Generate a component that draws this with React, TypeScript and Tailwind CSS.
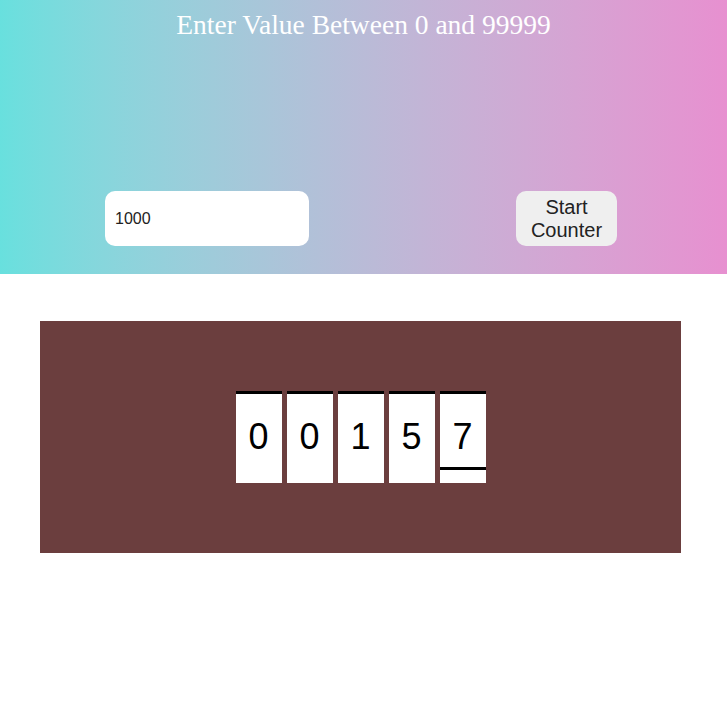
import { useState } from "react";

const digits = ["0", "0", "1", "5", "7"];

export default function App() {
  const [value, setValue] = useState("1000");

  return (
    <div className="w-full min-h-screen bg-white">
      {/* Header */}
      <section className="h-[274px] flex flex-col bg-gradient-to-r from-[#68e0de] to-[#e790d0]">
        <h1 className="pt-[8px] text-center text-[27.5px] leading-[34px] text-white font-['Liberation_Serif',serif]">
          Enter Value Between 0 and 99999
        </h1>
        <div className="mt-auto mb-[28px] flex items-center justify-between pl-[105px] pr-[110px]">
          <input
            value={value}
            onChange={(e) => setValue(e.target.value)}
            className="w-[204px] h-[55px] rounded-[10px] bg-white px-[10px] text-[16px] text-[#222] outline-none font-['Liberation_Sans',sans-serif]"
          />
          <button className="w-[101px] h-[55px] rounded-[10px] bg-[#efefef] text-[20px] leading-[23px] text-[#222] font-['Liberation_Sans',sans-serif]">
            Start
            <br />
            Counter
          </button>
        </div>
      </section>

      {/* Counter */}
      <section className="pt-[47px] px-[40px]">
        <div className="w-[641px] h-[232px] bg-[#6b3e3e] flex items-center justify-center">
          <div className="flex gap-[5px]">
            {digits.map((d, i) => (
              <div
                key={i}
                className="relative w-[46px] h-[92px] bg-white border-t-[3px] border-black flex items-center justify-center text-[36px] text-black font-['Liberation_Sans',sans-serif]"
              >
                <span className="-mt-[4px]">{d}</span>
                {i === digits.length - 1 && (
                  <div className="absolute left-0 right-0 top-[73px] h-[3px] bg-black" />
                )}
              </div>
            ))}
          </div>
        </div>
      </section>
    </div>
  );
}
